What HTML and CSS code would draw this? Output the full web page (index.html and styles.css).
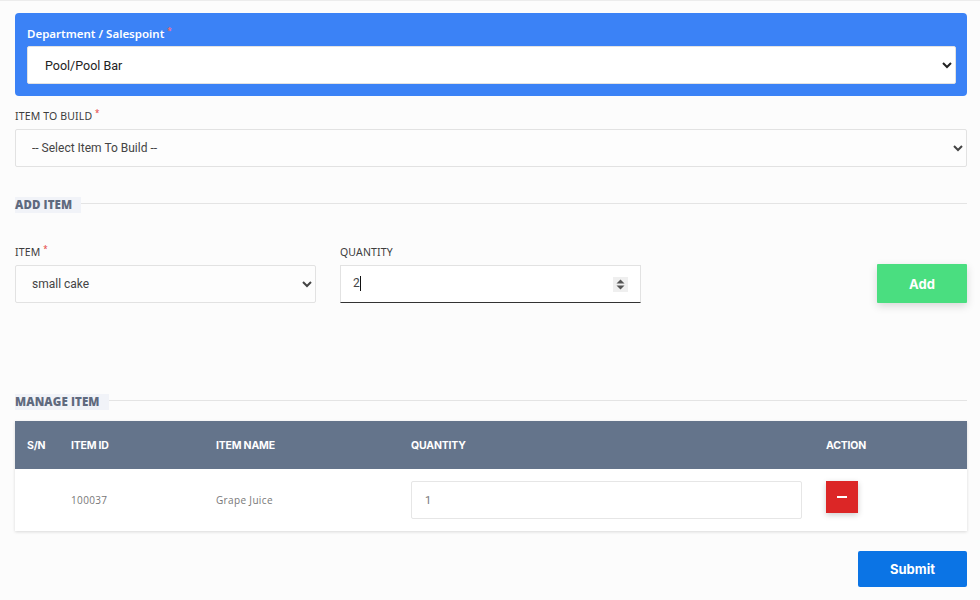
FILE: index.html
```html
<!DOCTYPE html>
<html>
<head>
<meta charset="utf-8">
<link rel="stylesheet" href="styles.css">
</head>
<body>
<div class="page">
  <div class="dept-card">
    <label class="dept-label">Department / Salespoint <span class="req">*</span></label>
    <select class="control dept-select"><option>Pool/Pool Bar</option></select>
  </div>

  <div class="field build-field">
    <label class="label">ITEM TO BUILD <span class="req">*</span></label>
    <select class="control"><option>-- Select Item To Build --</option></select>
  </div>

  <div class="section-title"><span>ADD ITEM</span></div>

  <div class="add-row">
    <div class="field">
      <label class="label">ITEM <span class="req">*</span></label>
      <select class="control"><option>small cake</option></select>
    </div>
    <div class="field">
      <label class="label">QUANTITY</label>
      <div class="qty-box">
        <span class="qty-val">2<span class="caret"></span></span>
        <span class="spin">
          <svg width="15" height="15" viewBox="0 0 15 15"><rect width="15" height="15" fill="#efefef"/><path d="M3.5 6.5 L7.5 2.5 L11.5 6.5 Z" fill="#555"/><path d="M3.5 8.5 L7.5 12.5 L11.5 8.5 Z" fill="#555"/></svg>
        </span>
      </div>
    </div>
    <div class="add-cell">
      <button class="btn-add">Add</button>
    </div>
  </div>

  <div class="section-title manage"><span>MANAGE ITEM</span></div>

  <div class="table">
    <div class="thead">
      <div>S/N</div>
      <div>ITEM ID</div>
      <div>ITEM NAME</div>
      <div>QUANTITY</div>
      <div>ACTION</div>
    </div>
    <div class="trow">
      <div></div>
      <div>100037</div>
      <div>Grape Juice</div>
      <div><div class="qty-input">1</div></div>
      <div><button class="btn-remove"><span class="minus"></span></button></div>
    </div>
  </div>

  <div class="submit-row">
    <button class="btn-submit">Submit</button>
  </div>
</div>
</body>
</html>
```

FILE: styles.css
```css
html, body {
  margin: 0;
  padding: 0;
  background: #fcfcfc;
}
body {
  border-top: 1px solid #ececec;
  font-family: "Noto Sans", "Open Sans", sans-serif;
  color: #333;
}
.page {
  padding: 12px 13px 0 15px;
}
.dept-card {
  background: #3b82f6;
  border-radius: 4px;
  padding: 12px 11px 12px 12px;
  display: flex;
  flex-direction: column;
  gap: 3px;
}
.dept-label {
  color: #fff;
  font-size: 11.5px;
  font-weight: 600;
  line-height: 18px;
}
.req {
  color: #e53e3e;
  font-size: 8px;
  vertical-align: top;
  position: relative;
  top: -3px;
}
.dept-label .req { color: #ff6b6b; }
.control {
  height: 38px;
  width: 100%;
  border: 1px solid #e2e2e2;
  border-radius: 2px;
  background: #fdfdfd;
  font-family: Roboto, "Noto Sans", sans-serif;
  font-size: 12px;
  color: #444;
  padding: 0 12px;
  box-sizing: border-box;
}
.dept-select {
  background: #fff;
  color: #222;
  padding-left: 13px;
  font-size: 12.5px;
}
.field {
  display: flex;
  flex-direction: column;
  gap: 6px;
}
.label {
  font-size: 10.5px;
  color: #3d3d3d;
  line-height: 14px;
  letter-spacing: 0.15px;
}
.build-field {
  margin-top: 13px;
}
.section-title {
  margin-top: 30px;
  height: 16px;
  position: relative;
  display: flex;
  align-items: center;
}
.section-title::after {
  content: "";
  flex: 1;
  height: 1px;
  background: #e4e4e4;
  margin-top: -4px;
}
.section-title span {
  background: #f1f3f8;
  font-size: 11.5px;
  font-weight: 800;
  color: #5f6a7e;
  line-height: 16px;
  padding-right: 9px;
  font-family: "Open Sans", "Noto Sans", sans-serif;
  letter-spacing: 0.1px;
}
.add-row {
  margin-top: 32px;
  display: grid;
  grid-template-columns: 301px 301px 1fr;
  column-gap: 24px;
}
.qty-box {
  height: 38px;
  box-sizing: border-box;
  border: 1px solid #e2e2e2;
  border-bottom: 1.5px solid #333;
  background: #fff;
  display: flex;
  align-items: center;
  justify-content: space-between;
  padding: 0 12px 0 12px;
  font-family: Roboto, sans-serif;
  font-size: 12px;
  color: #444;
}
.caret {
  display: inline-block;
  width: 1px;
  height: 15px;
  background: #111;
  vertical-align: middle;
  margin-left: 0;
  position: relative;
  top: -1px;
}
.spin svg { display: block; }
.add-cell {
  display: flex;
  justify-content: flex-end;
  align-items: flex-start;
  padding-top: 19px;
}
.btn-add {
  width: 90px;
  height: 39px;
  border: none;
  border-radius: 1px;
  background: #4ade80;
  color: #fff;
  font-family: Inter, "Noto Sans", sans-serif;
  font-weight: 700;
  font-size: 13px;
  box-shadow: 0 3px 8px rgba(0,0,0,0.15);
}
.manage {
  margin-top: 91px;
}
.table {
  margin-top: 11px;
  background: #fff;
  box-shadow: 0 1px 3px rgba(0,0,0,0.14);
}
.thead, .trow {
  display: grid;
  grid-template-columns: 44px 145px 195px 415px 1fr;
  padding-left: 12px;
  align-items: center;
}
.thead {
  background: #64748b;
  height: 48px;
  color: #fff;
  font-family: Inter, "Noto Sans", sans-serif;
  font-weight: 700;
  font-size: 10.5px;
  letter-spacing: -0.2px;
}
.trow {
  height: 62px;
  font-family: "Open Sans", "Noto Sans", sans-serif;
  font-size: 10px;
  color: #777;
  letter-spacing: 0.35px;
}
.qty-input {
  width: 391px;
  height: 38px;
  box-sizing: border-box;
  border: 1px solid #e6e6e6;
  border-radius: 2px;
  display: flex;
  align-items: center;
  padding-left: 13px;
  font-family: Roboto, sans-serif;
  font-size: 11px;
  color: #777;
}
.btn-remove {
  width: 32px;
  height: 32px;
  border: none;
  background: #dc2626;
  display: flex;
  align-items: center;
  justify-content: center;
  box-shadow: 0 2px 6px rgba(0,0,0,0.2);
  margin-top: -6px;
  padding: 0;
}
.minus {
  width: 10px;
  height: 2px;
  background: #fff;
}
.submit-row {
  display: flex;
  justify-content: flex-end;
  margin-top: 20px;
}
.btn-submit {
  width: 109px;
  height: 36px;
  border: none;
  border-radius: 2px;
  background: #0b74e5;
  color: #fff;
  font-family: Inter, "Noto Sans", sans-serif;
  font-weight: 700;
  font-size: 13px;
}
```
